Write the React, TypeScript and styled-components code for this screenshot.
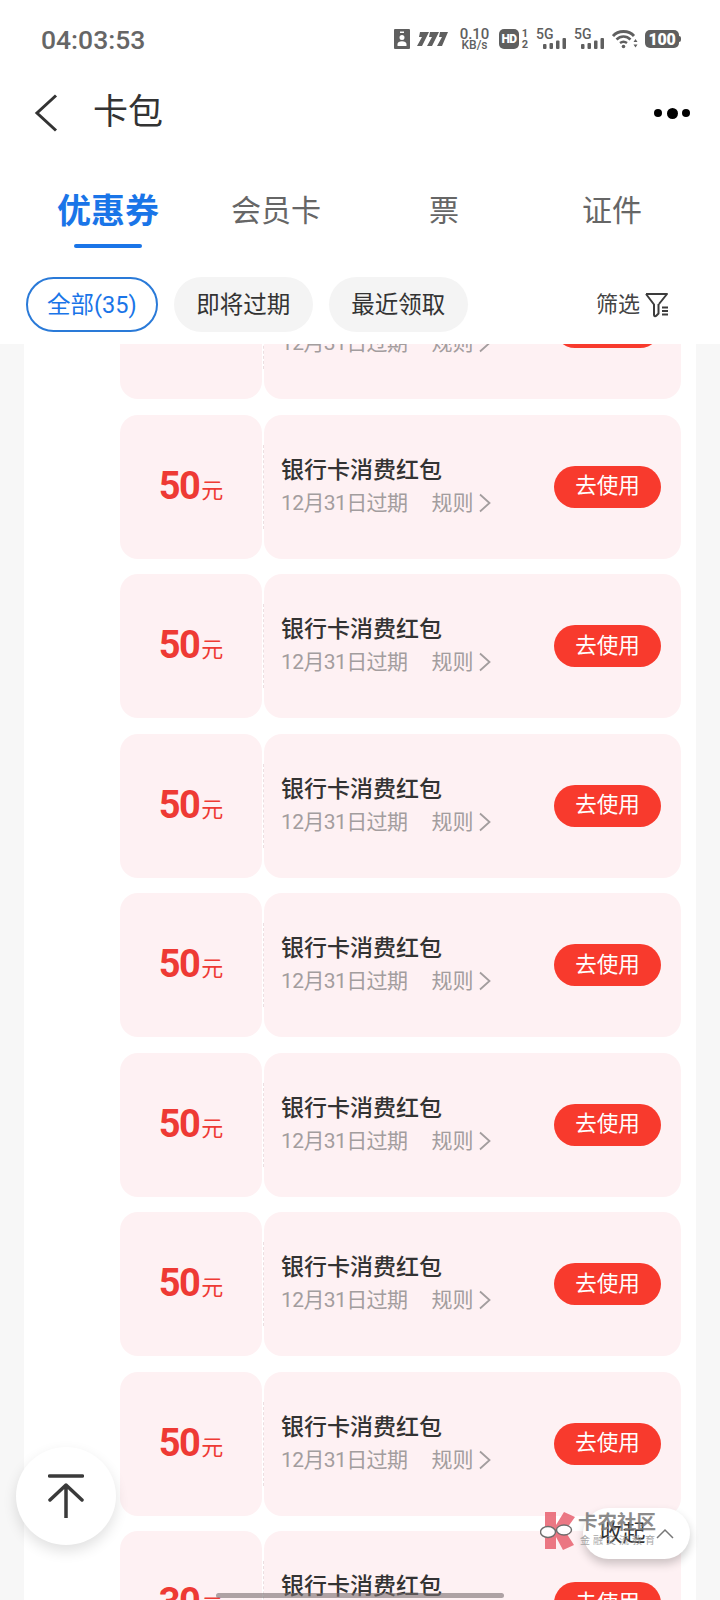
import React from 'react';
import styled, { createGlobalStyle } from 'styled-components';

const GlobalStyle = createGlobalStyle`
  html, body {
    margin: 0;
    padding: 0;
    background: #fff;
  }
  * {
    box-sizing: border-box;
  }
`;

const FONT = `Roboto, "Noto Sans CJK SC", sans-serif`;

const Page = styled.div`
  position: relative;
  display: flex;
  flex-direction: column;
  width: 720px;
  height: 1600px;
  overflow: hidden;
  background: #fff;
  font-family: ${FONT};
`;

const Header = styled.header`
  position: relative;
  z-index: 2;
  flex: none;
  height: 344px;
  background: #fff;
`;

const StatusBar = styled.div`
  display: flex;
  align-items: center;
  justify-content: space-between;
  height: 78px;
  padding: 0 39px 0 41px;
`;

const Clock = styled.div`
  font-size: 26.5px;
  font-weight: 500;
  color: #666;
`;

const StatusIcons = styled.div`
  display: flex;
  align-items: center;
  color: #5f5f5f;
`;

const Speed = styled.div`
  display: flex;
  flex-direction: column;
  align-items: center;
  width: 31px;
  margin: 0 9px 0 11px;
  font-size: 15px;
  line-height: 12px;
  font-weight: 500;
`;

const SpeedUnit = styled.span`
  font-size: 12px;
  line-height: 11px;
`;

const HdBadge = styled.span`
  display: flex;
  align-items: center;
  justify-content: center;
  width: 20px;
  height: 20px;
  border-radius: 5px;
  background: #5f5f5f;
  color: #fff;
  font-size: 12px;
  font-weight: 900;
  letter-spacing: -0.5px;
`;

const SimStack = styled.span`
  display: flex;
  flex-direction: column;
  align-items: center;
  width: 8px;
  margin: 0 7px 0 2px;
  font-size: 11px;
  line-height: 11px;
  font-weight: 700;
`;

const Signal = styled.span`
  display: flex;
  flex-direction: column;
  width: 30px;
  margin-right: 8px;
`;

const SignalLabel = styled.span`
  font-size: 14px;
  line-height: 10px;
  font-weight: 500;
`;

const SignalBars = styled.svg`
  align-self: flex-end;
  margin-top: -1px;
`;

const Battery = styled.span`
  position: relative;
  display: flex;
  align-items: center;
  justify-content: center;
  width: 34px;
  height: 18px;
  margin: 0 2px 0 7px;
  border-radius: 5px;
  background: #5f5f5f;
  color: #fff;
  font-size: 16px;
  font-weight: 900;
  letter-spacing: -0.2px;

  &::after {
    content: '';
    position: absolute;
    right: -2px;
    top: 6px;
    width: 2px;
    height: 6px;
    border-radius: 0 2px 2px 0;
    background: #5f5f5f;
  }
`;

const NavBar = styled.div`
  display: flex;
  align-items: center;
  height: 70px;
  padding: 0 30px 0 34px;
`;

const NavTitle = styled.h1`
  flex: 1;
  margin: 0 0 0 35px;
  font-size: 35px;
  line-height: 50px;
  font-weight: 400;
  color: #333;
`;

const Dots = styled.div`
  display: flex;
  align-items: center;
  gap: 4.5px;
`;

const Dot = styled.span<{ $size: number }>`
  width: ${(p) => p.$size}px;
  height: ${(p) => p.$size}px;
  border-radius: 50%;
  background: #000;
`;

const Tabs = styled.div`
  display: grid;
  grid-template-columns: repeat(4, 168px);
  padding: 0 24px;
  margin-top: 7px;
  height: 92px;
`;

const Tab = styled.div<{ $active?: boolean }>`
  position: relative;
  display: flex;
  justify-content: center;
  padding-top: 34px;
  font-size: ${(p) => (p.$active ? 34 : 30)}px;
  line-height: 44px;
  font-weight: ${(p) => (p.$active ? 700 : 400)};
  color: ${(p) => (p.$active ? '#1a75e8' : '#666')};

  ${(p) =>
    p.$active &&
    `
    &::after {
      content: '';
      position: absolute;
      left: 50%;
      bottom: -1px;
      width: 68px;
      height: 4px;
      margin-left: -34px;
      border-radius: 2px;
      background: #1a75e8;
    }
  `}
`;

const Filters = styled.div`
  display: flex;
  align-items: center;
  gap: 16px;
  margin-top: 30px;
  padding: 0 50px 0 26px;
`;

const Chip = styled.div<{ $active?: boolean }>`
  display: flex;
  align-items: center;
  justify-content: center;
  height: 55px;
  padding: 0 ${(p) => (p.$active ? 19 : 22.5)}px;
  border-radius: 28px;
  font-size: 23.5px;
  line-height: 34px;
  background: ${(p) => (p.$active ? '#fff' : '#f4f4f4')};
  color: ${(p) => (p.$active ? '#1a75e8' : '#333')};
  border: ${(p) => (p.$active ? '2px solid #2a7ad8' : 'none')};
`;

const FilterButton = styled.div`
  display: flex;
  align-items: center;
  gap: 4px;
  margin-left: auto;
  font-size: 22px;
  line-height: 32px;
  color: #444;
`;

const Scroller = styled.main`
  flex: 1;
  overflow: hidden;
  padding: 0 24px;
  background: #f7f7f7;
`;

const Sheet = styled.div`
  display: grid;
  row-gap: 15.5px;
  min-height: 100%;
  margin-top: -89px;
  padding: 0 15px 0 96px;
  background: #fff;
`;

const Coupon = styled.article`
  display: grid;
  grid-template-columns: 142px 417px;
  column-gap: 2px;
  height: 144px;
`;

const AmountPane = styled.div`
  display: flex;
  align-items: baseline;
  justify-content: center;
  padding-top: 46px;
  border-radius: 18px;
  background: #fef1f3;
  color: #ee3a34;
`;

const AmountValue = styled.span`
  font-size: 38px;
  line-height: 50px;
  font-weight: 700;
  letter-spacing: -1.5px;
`;

const AmountUnit = styled.span`
  margin-left: 2px;
  font-size: 22px;
  position: relative;
  top: -1px;
`;

const DetailPane = styled.div`
  position: relative;
  display: flex;
  align-items: center;
  justify-content: space-between;
  padding: 0 20px 0 17px;
  border-radius: 18px;
  background: #fef1f3;

  &::before {
    content: '';
    position: absolute;
    left: -1px;
    top: 30px;
    bottom: 30px;
    border-left: 1px dashed #ecdfe1;
  }
`;

const Info = styled.div`
  display: flex;
  flex-direction: column;
`;

const CouponTitle = styled.div`
  font-size: 23px;
  line-height: 32px;
  font-weight: 500;
  color: #333;
`;

const Meta = styled.div`
  display: flex;
  align-items: center;
  font-size: 21px;
  line-height: 32px;
  color: #a39d9e;
`;

const Expiry = styled.span`
  letter-spacing: -0.6px;
`;

const RuleLink = styled.span`
  display: flex;
  align-items: center;
  gap: 6px;
  margin-left: 24px;
`;

const UseButton = styled.button`
  width: 107px;
  height: 42px;
  padding: 0 0 1px;
  border: none;
  border-radius: 21px;
  background: #f83a2d;
  color: #fff;
  font-family: inherit;
  font-size: 21.5px;
  line-height: 30px;
`;

const TopButton = styled.div`
  position: absolute;
  z-index: 3;
  left: 16px;
  top: 1447px;
  display: flex;
  align-items: center;
  justify-content: center;
  width: 100px;
  height: 98px;
  border-radius: 50%;
  background: #fff;
  box-shadow: 0 6px 14px rgba(0, 0, 0, 0.12);
`;

const CollapseButton = styled.div`
  position: absolute;
  z-index: 3;
  left: 583px;
  top: 1508px;
  display: flex;
  align-items: center;
  justify-content: center;
  gap: 10px;
  width: 107px;
  height: 51px;
  border-radius: 26px;
  background: #fff;
  box-shadow: 0 5px 10px rgba(0, 0, 0, 0.2);
  font-size: 23px;
  line-height: 32px;
  color: #333;
`;

const Watermark = styled.div`
  position: absolute;
  z-index: 4;
  left: 540px;
  top: 1512px;
  display: flex;
  gap: 3px;
  opacity: 0.85;
`;

const WatermarkText = styled.div`
  display: flex;
  flex-direction: column;
  width: 80px;
`;

const WatermarkTitle = styled.span`
  font-size: 19.5px;
  line-height: 22px;
  font-weight: 700;
  color: #777;
`;

const WatermarkSub = styled.span`
  padding-left: 2px;
  font-size: 10px;
  line-height: 14px;
  letter-spacing: 3px;
  white-space: nowrap;
  color: #999;
`;

const HomeIndicator = styled.div`
  position: absolute;
  z-index: 5;
  left: 216px;
  top: 1593px;
  width: 288px;
  height: 5px;
  border-radius: 3px;
  background: rgba(120, 110, 112, 0.6);
`;

const ContactIcon = () => (
  <svg width="16" height="20" viewBox="0 0 16 20">
    <path
      fill="#5f5f5f"
      fillRule="evenodd"
      d="M1 0h14a1 1 0 0 1 1 1v18a1 1 0 0 1-1 1H1a1 1 0 0 1-1-1V1a1 1 0 0 1 1-1zM6 2.500v1.500h4V2.500zM8 6a2.500 2.500 0 1 0 0 5 2.500 2.500 0 0 0 0-5zM3.500 17h9v-2c0-1.500-2-2.800-4.500-2.800S3.500 13.500 3.500 15z"
    />
  </svg>
);

const CarrierLogo = () => (
  <svg width="31" height="14" viewBox="0 0 31 14" style={{ marginLeft: 7 }}>
    <path
      fill="#5f5f5f"
      d="M3 0h9l-7 14H0l5-9H2zM13 0h9l-7 14h-5l5-9h-3zM23 0h8l-6 14h-5l5-9h-3z"
    />
  </svg>
);

const Bars = () => (
  <SignalBars width="23" height="11" viewBox="0 0 23 11">
    <rect x="0" y="6" width="3.500" height="5" rx="1" fill="#5f5f5f" />
    <rect x="6.500" y="5" width="3.500" height="6" rx="1" fill="#5f5f5f" />
    <rect x="13" y="2.500" width="3.500" height="8.500" rx="1" fill="#5f5f5f" />
    <rect x="19.500" y="0" width="3.500" height="11" rx="1" fill="#5f5f5f" />
  </SignalBars>
);

const WifiIcon = () => (
  <svg width="26" height="20" viewBox="0 0 26 20" fill="none" stroke="#5f5f5f">
    <path strokeWidth="2.800" d="M1 7C6 1 17 1 22 7" />
    <path strokeWidth="2.600" d="M4.500 10.500c4-4 10-4 14 0" />
    <path strokeWidth="2.400" d="M8 14c2-1.500 5-1.500 7 0" />
    <circle cx="11.500" cy="17.500" r="1.800" fill="#5f5f5f" stroke="none" />
    <path fill="#5f5f5f" stroke="none" d="M23.500 10l2 3h-4zM21.500 15.500h4l-2 3z" />
  </svg>
);

const BackIcon = () => (
  <svg width="24" height="38" viewBox="0 0 24 38" fill="none">
    <path d="M22 1.500L3 19l19 17.500" stroke="#333" strokeWidth="3" />
  </svg>
);

const FilterIcon = () => (
  <svg width="26" height="26" viewBox="0 0 26 26" fill="none" stroke="#3c3c3c" strokeWidth="2">
    <path strokeLinejoin="round" d="M2 2h21l-8 10v-0M2 2l8 10.500V23c0 1.500 1.500 1.500 2.500.5l2-2V12" />
    <path d="M18 15.500h6M18 19h6M18 22.500h6" />
  </svg>
);

const RuleChevron = () => (
  <svg width="12" height="20" viewBox="0 0 12 20" fill="none">
    <path d="M1 1.500L10.500 10 1 18.500" stroke="#a39d9e" strokeWidth="1.800" />
  </svg>
);

const TopIcon = () => (
  <svg width="36" height="44" viewBox="0 0 36 44" fill="none" stroke="#3a3a3a" strokeWidth="3.500" strokeLinecap="round">
    <path d="M1.500 2h33" />
    <path d="M18 44V11M2 26l16-15 16 15" strokeLinejoin="round" />
  </svg>
);

const UpChevron = () => (
  <svg width="18" height="11" viewBox="0 0 18 11" fill="none">
    <path d="M1 10l8-8 8 8" stroke="#777" strokeWidth="1.500" />
  </svg>
);

const WatermarkLogo = () => (
  <svg width="35" height="38" viewBox="0 0 35 38">
    <path fill="#e8616f" d="M5 0h11v13l8-13 11 5-10 14 9 14-11 5-7-13v12H5z" />
    <ellipse cx="8" cy="20" rx="7.500" ry="5.500" fill="#fff" stroke="#555" strokeWidth="1.400" />
    <ellipse cx="24" cy="18" rx="7.500" ry="5" fill="#fff" stroke="#555" strokeWidth="1.400" />
  </svg>
);

const COUPONS = ['50', '50', '50', '50', '50', '50', '50', '50', '30'];

const App: React.FC = () => {
  return (
    <Page>
      <GlobalStyle />
      <Header>
        <StatusBar>
          <Clock>04:03:53</Clock>
          <StatusIcons>
            <ContactIcon />
            <CarrierLogo />
            <Speed>
              0.10
              <SpeedUnit>KB/s</SpeedUnit>
            </Speed>
            <HdBadge>HD</HdBadge>
            <SimStack>
              <span>1</span>
              <span>2</span>
            </SimStack>
            <Signal>
              <SignalLabel>5G</SignalLabel>
              <Bars />
            </Signal>
            <Signal>
              <SignalLabel>5G</SignalLabel>
              <Bars />
            </Signal>
            <WifiIcon />
            <Battery>100</Battery>
          </StatusIcons>
        </StatusBar>
        <NavBar>
          <BackIcon />
          <NavTitle>卡包</NavTitle>
          <Dots>
            <Dot $size={8} />
            <Dot $size={11} />
            <Dot $size={8} />
          </Dots>
        </NavBar>
        <Tabs>
          <Tab $active>优惠券</Tab>
          <Tab>会员卡</Tab>
          <Tab>票</Tab>
          <Tab>证件</Tab>
        </Tabs>
        <Filters>
          <Chip $active>全部(35)</Chip>
          <Chip>即将过期</Chip>
          <Chip>最近领取</Chip>
          <FilterButton>
            筛选
            <FilterIcon />
          </FilterButton>
        </Filters>
      </Header>
      <Scroller>
        <Sheet>
          {COUPONS.map((amount, i) => (
            <Coupon key={i}>
              <AmountPane>
                <AmountValue>{amount}</AmountValue>
                <AmountUnit>元</AmountUnit>
              </AmountPane>
              <DetailPane>
                <Info>
                  <CouponTitle>银行卡消费红包</CouponTitle>
                  <Meta>
                    <Expiry>12月31日过期</Expiry>
                    <RuleLink>
                      规则
                      <RuleChevron />
                    </RuleLink>
                  </Meta>
                </Info>
                <UseButton>去使用</UseButton>
              </DetailPane>
            </Coupon>
          ))}
        </Sheet>
      </Scroller>
      <TopButton>
        <TopIcon />
      </TopButton>
      <CollapseButton>
        收起
        <UpChevron />
      </CollapseButton>
      <Watermark>
        <WatermarkLogo />
        <WatermarkText>
          <WatermarkTitle>卡农社区</WatermarkTitle>
          <WatermarkSub>金融交流教育</WatermarkSub>
        </WatermarkText>
      </Watermark>
      <HomeIndicator />
    </Page>
  );
};

export default App;
